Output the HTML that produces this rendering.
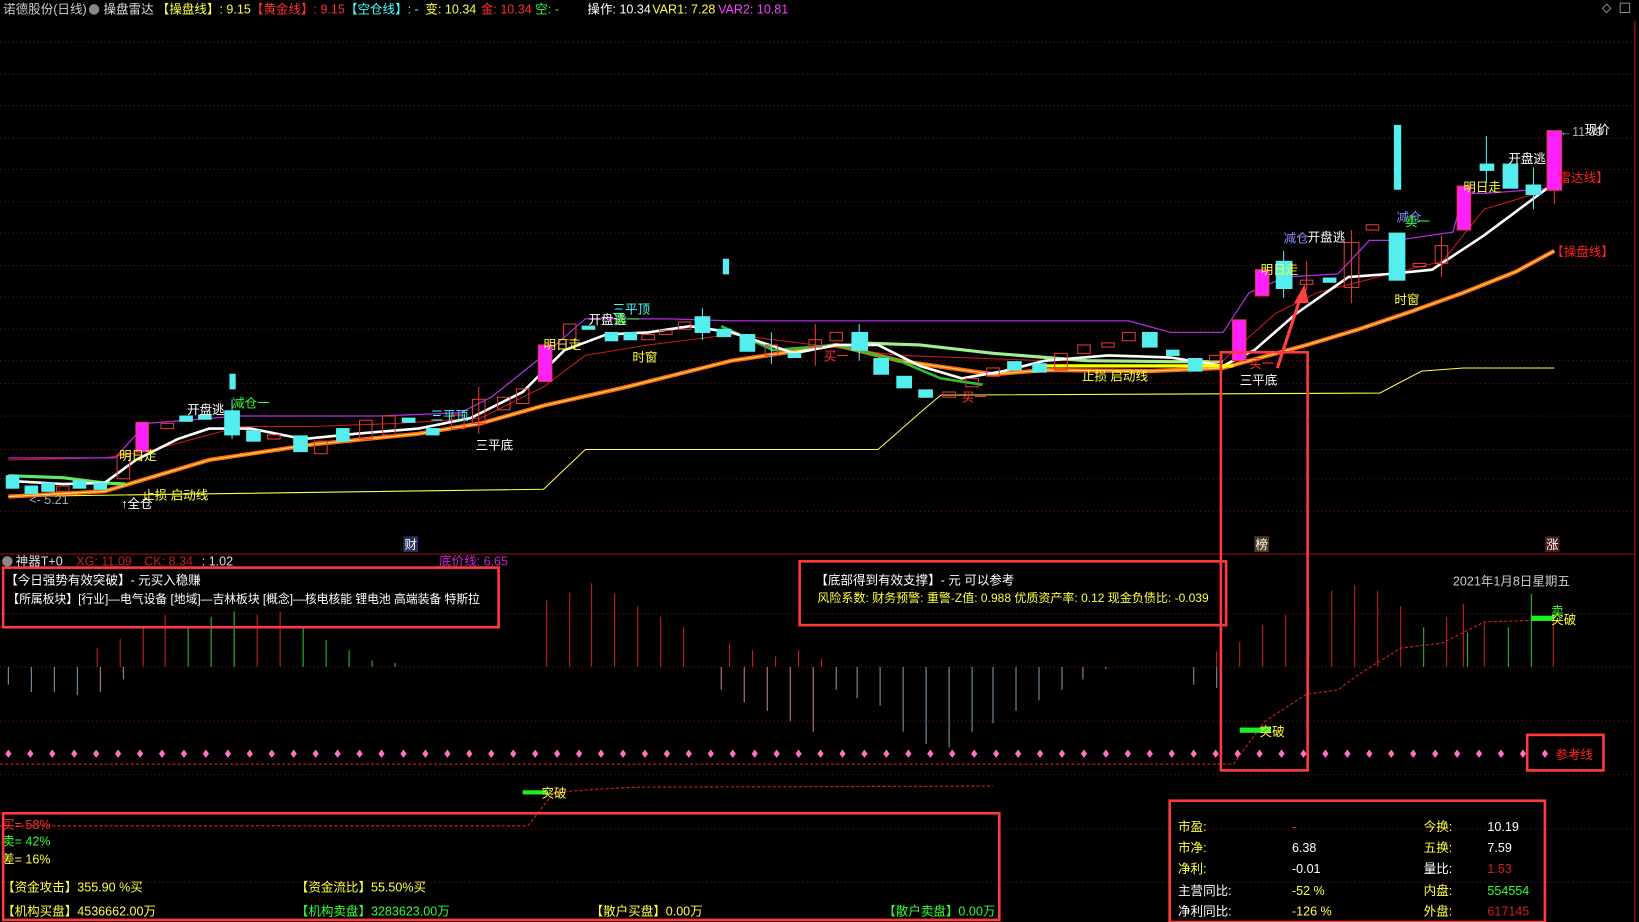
<!DOCTYPE html>
<html><head><meta charset="utf-8">
<style>
html,body{margin:0;padding:0;background:#000;overflow:hidden;}
svg{display:block;}
text{font-family:"Liberation Sans","Noto Sans CJK SC",sans-serif;font-size:12px;}
.s{font-size:11.3px;}
</style></head>
<body>
<svg width="1639" height="922" viewBox="0 0 1568 882" preserveAspectRatio="none" xmlns="http://www.w3.org/2000/svg">
<rect width="1568" height="882" fill="#000"/>
<g stroke="#7a1010" stroke-width="1" stroke-dasharray="1,3">
<line x1="0" y1="40" x2="1562" y2="40"/><line x1="0" y1="71" x2="1562" y2="71"/><line x1="0" y1="101" x2="1562" y2="101"/>
<line x1="0" y1="132" x2="1562" y2="132"/><line x1="0" y1="162" x2="1562" y2="162"/><line x1="0" y1="193" x2="1562" y2="193"/>
<line x1="0" y1="223" x2="1562" y2="223"/><line x1="0" y1="254" x2="1562" y2="254"/><line x1="0" y1="284" x2="1562" y2="284"/>
<line x1="0" y1="315" x2="1562" y2="315"/><line x1="0" y1="345" x2="1562" y2="345"/><line x1="0" y1="367" x2="1562" y2="367"/>
<line x1="0" y1="398" x2="1562" y2="398"/><line x1="0" y1="430" x2="1562" y2="430"/><line x1="0" y1="458" x2="1562" y2="458"/>
<line x1="0" y1="489" x2="1562" y2="489"/>
<line x1="0" y1="587" x2="1562" y2="587"/><line x1="0" y1="638" x2="1562" y2="638"/><line x1="0" y1="690" x2="1562" y2="690"/>
<line x1="0" y1="741" x2="1562" y2="741"/><line x1="0" y1="793" x2="1562" y2="793"/><line x1="0" y1="844" x2="1562" y2="844"/>
</g>
<line x1="1564" y1="20" x2="1564" y2="882" stroke="#c01818"/>
<line x1="0" y1="530" x2="1564" y2="530" stroke="#a01515"/>

<text x="3" y="13" fill="#ccc">诺德股份(日线)</text>
<circle cx="90" cy="9" r="5" fill="#888"/>
<text x="99" y="13" fill="#ddd">操盘雷达</text>
<text x="150" y="13" fill="#ffff40">【操盘线】: 9.15</text>
<text x="240" y="13" fill="#ff3030">【黄金线】: 9.15</text>
<text x="330" y="13" fill="#40ffff">【空仓线】: -</text>
<text x="407" y="13" fill="#ffff40">变: 10.34</text>
<text x="460" y="13" fill="#ff3030">金: 10.34</text>
<text x="512" y="13" fill="#30ff30">空: -</text>
<text x="562" y="13" fill="#fff">操作: 10.34</text>
<text x="624" y="13" fill="#ffff40">VAR1: 7.28</text>
<text x="687" y="13" fill="#ff40ff">VAR2: 10.81</text>
<path d="M1537,4 l4,4 -4,4 -4,-4z" fill="none" stroke="#888"/>
<rect x="1550" y="3" width="9" height="9" fill="none" stroke="#888"/>

<polyline fill="none" stroke="#ffff40" stroke-width="1" points="8,475 520,468 560,430 840,430 880,395 900,378 1320,376 1360,355 1400,352 1487,352"/>
<polyline fill="none" stroke="#cc1a1a" stroke-width="1" points="8,440 100,438 140,432 230,408 300,408 380,405 460,400 520,370 560,340 620,330 700,320 780,330 860,340 1000,345 1170,345 1220,300 1260,280 1330,262 1380,250 1420,200 1487,180"/>
<polyline fill="none" stroke="#ff6a10" stroke-width="4" points="8,475 100,470 200,440 300,425 400,415 460,405 520,388 600,370 700,345 800,330 860,345 950,358 1000,354 1100,355 1170,352 1250,330 1300,315 1350,298 1400,280 1450,260 1487,240"/>
<polyline fill="none" stroke="#ffe060" stroke-width="1" points="8,475 100,470 200,440 300,425 400,415 460,405 520,388 600,370 700,345 800,330 860,345 950,358 1000,354 1100,355 1170,352 1250,330 1300,315 1350,298 1400,280 1450,260 1487,240"/>
<polyline fill="none" stroke="#b030e0" stroke-width="1.2" points="8,438 110,438 140,405 230,398 300,398 360,398 440,395 470,380 520,340 560,305 620,305 640,305 700,307 1080,307 1120,318 1170,318 1195,280 1230,265 1280,262 1310,230 1335,230 1390,222 1400,185 1420,185 1487,180"/>
<polyline fill="none" stroke="#60e860" stroke-width="3" points="8,455 60,457 100,462 120,463"/>
<polyline fill="none" stroke="#30c030" stroke-width="2.5" points="690,312 740,335 800,330 860,345 900,362 940,368"/>
<polyline fill="none" stroke="#a0f090" stroke-width="3" points="820,328 880,330 950,338 1040,345 1120,346 1170,346"/>
<polyline fill="none" stroke="#fff" stroke-width="2.5" points="8,460 60,463 100,462 130,440 170,420 200,410 240,410 290,420 340,415 400,410 450,400 500,375 540,335 580,320 620,318 660,312 700,318 760,338 800,330 840,330 880,350 920,362 960,355 1000,345 1060,340 1120,342 1170,350 1200,335 1240,300 1290,265 1330,262 1370,258 1420,225 1487,175"/>
<line x1="1000" y1="350" x2="1180" y2="350" stroke="#ffff00" stroke-width="3"/>

<g stroke-width="1">
<g fill="#55eeee" stroke="#55eeee">
<rect x="6" y="455" width="12" height="12"/><rect x="24" y="465" width="12" height="7"/><rect x="40" y="462" width="12" height="8"/>
<rect x="70" y="460" width="12" height="7"/><rect x="90" y="462" width="12" height="6"/><rect x="172" y="398" width="12" height="5"/>
<rect x="190" y="397" width="12" height="4"/><rect x="215" y="393" width="14" height="23"/><rect x="236" y="412" width="13" height="10"/>
<rect x="281" y="417" width="13" height="15"/><rect x="322" y="410" width="12" height="12"/><rect x="385" y="400" width="12" height="4"/>
<rect x="408" y="410" width="12" height="6"/><rect x="557" y="312" width="12" height="3"/><rect x="579" y="318" width="12" height="8"/>
<rect x="597" y="318" width="12" height="7"/><rect x="665" y="303" width="14" height="15"/><rect x="686" y="315" width="13" height="7"/>
<rect x="708" y="320" width="14" height="16"/><rect x="754" y="338" width="12" height="4"/><rect x="815" y="318" width="15" height="17"/>
<rect x="836" y="343" width="14" height="15"/><rect x="858" y="360" width="14" height="11"/><rect x="879" y="373" width="13" height="7"/>
<rect x="964" y="346" width="13" height="8"/><rect x="988" y="348" width="13" height="8"/><rect x="1093" y="318" width="14" height="14"/>
<rect x="1116" y="335" width="12" height="5"/><rect x="1137" y="343" width="13" height="12"/><rect x="1221" y="250" width="15" height="26"/>
<rect x="1266" y="266" width="12" height="4"/><rect x="1329" y="223" width="15" height="45"/><rect x="1416" y="157" width="13" height="6"/>
<rect x="1438" y="157" width="14" height="23"/><rect x="1460" y="177" width="14" height="9"/>
<rect x="1334" y="120" width="6" height="61"/><rect x="692" y="248" width="5" height="14"/><rect x="220" y="358" width="5" height="14"/>
</g>
<g fill="none" stroke="#e03a3a">
<rect x="54" y="465" width="12" height="5"/><rect x="112" y="435" width="12" height="23"/><rect x="154" y="405" width="12" height="5"/>
<rect x="256" y="416" width="12" height="4"/><rect x="301" y="422" width="12" height="12"/><rect x="344" y="402" width="12" height="18"/>
<rect x="366" y="398" width="12" height="18"/><rect x="432" y="397" width="12" height="13"/><rect x="452" y="382" width="12" height="23"/>
<rect x="476" y="380" width="12" height="12"/><rect x="494" y="372" width="12" height="14"/><rect x="539" y="310" width="12" height="15"/>
<rect x="614" y="320" width="12" height="5"/><rect x="631" y="316" width="12" height="4"/><rect x="649" y="308" width="12" height="7"/>
<rect x="732" y="330" width="12" height="10"/><rect x="774" y="325" width="12" height="7"/><rect x="794" y="318" width="12" height="8"/>
<rect x="902" y="375" width="12" height="5"/><rect x="924" y="362" width="12" height="8"/><rect x="944" y="352" width="12" height="8"/>
<rect x="1009" y="338" width="12" height="16"/><rect x="1031" y="330" width="12" height="8"/><rect x="1054" y="328" width="12" height="4"/>
<rect x="1074" y="318" width="12" height="8"/><rect x="1157" y="340" width="12" height="5"/><rect x="1244" y="268" width="12" height="4"/>
<rect x="1286" y="232" width="14" height="43"/><rect x="1307" y="215" width="12" height="5"/><rect x="1352" y="252" width="12" height="3"/>
<rect x="1373" y="235" width="12" height="17"/>
</g>
<g fill="#ff20ff" stroke="#e03a3a">
<rect x="130" y="404" width="12" height="28"/><rect x="515" y="330" width="13" height="35"/><rect x="1179" y="306" width="13" height="39"/>
<rect x="1201" y="258" width="13" height="25"/><rect x="1394" y="178" width="13" height="42"/><rect x="1480" y="125" width="14" height="57"/>
</g>
<g stroke="#e03a3a"><line x1="1487" y1="182" x2="1487" y2="195"/><line x1="1293" y1="220" x2="1293" y2="290"/><line x1="1379" y1="225" x2="1379" y2="265"/><line x1="1250" y1="250" x2="1250" y2="278"/><line x1="458" y1="370" x2="458" y2="415"/><line x1="780" y1="310" x2="780" y2="350"/></g>
<g stroke="#55eeee"><line x1="1422" y1="130" x2="1422" y2="175"/><line x1="1467" y1="160" x2="1467" y2="200"/><line x1="1228" y1="240" x2="1228" y2="285"/><line x1="672" y1="295" x2="672" y2="325"/><line x1="822" y1="310" x2="822" y2="345"/><line x1="222" y1="382" x2="222" y2="420"/><line x1="738" y1="318" x2="738" y2="348"/></g>
</g>

<g>
<text x="179" y="396" fill="#fff">开盘逃</text>
<text x="222" y="390" fill="#30ff30">减仓一</text>
<text x="114" y="440" fill="#ffff40">明日走</text>
<text x="136" y="478" fill="#ffff40">止损 启动线</text>
<text x="116" y="486" fill="#fff">↑全仓</text>
<text x="28" y="482" fill="#aaa">&lt;- 5.21</text>
<text x="412" y="402" fill="#40ffff">三平顶</text>
<text x="455" y="430" fill="#fff">三平底</text>
<text x="520" y="334" fill="#ffff40">明日走</text>
<text x="563" y="310" fill="#fff">开盘逃</text>
<text x="586" y="300" fill="#40ffff">三平顶</text>
<text x="588" y="310" fill="#30ff30">卖一</text>
<text x="605" y="346" fill="#ffff40">时窗</text>
<text x="788" y="345" fill="#ff3030">买一</text>
<text x="920" y="384" fill="#ff3030">买一</text>
<text x="1035" y="364" fill="#ffff40">止损 启动线</text>
<text x="1186" y="368" fill="#fff">三平底</text>
<text x="1195" y="352" fill="#ff3030">买一</text>
<text x="1206" y="262" fill="#ffff40">明日走</text>
<text x="1228" y="232" fill="#8888ff">减仓</text>
<text x="1251" y="231" fill="#fff">开盘逃</text>
<text x="1336" y="212" fill="#8888ff">减仓</text>
<text x="1344" y="216" fill="#30ff30">卖一</text>
<text x="1334" y="291" fill="#ffff40">时窗</text>
<text x="1400" y="183" fill="#ffff40">明日走</text>
<text x="1443" y="156" fill="#fff">开盘逃</text>
<text x="1492" y="130" fill="#aaa">←11.09</text>
<text x="1516" y="128" fill="#fff">现价</text>
<text x="1491" y="174" fill="#ff2020">雷达线】</text>
<text x="1484" y="245" fill="#ff2020">【操盘线】</text>
<rect x="386" y="513" width="14" height="15" fill="#24335a"/><text x="387" y="525" fill="#fff">财</text>
<rect x="1200" y="513" width="14" height="15" fill="#4a3a20"/><text x="1201" y="525" fill="#fff">榜</text>
<rect x="1478" y="513" width="14" height="15" fill="#4a1a1a"/><text x="1479" y="525" fill="#fff">涨</text>
</g>
<line x1="1222" y1="352" x2="1244" y2="285" stroke="#ff4040" stroke-width="3"/>
<path d="M1248,272 l-10,18 h14z" fill="#ff4040"/>

<circle cx="7" cy="537" r="5" fill="#888"/>
<text x="15" y="541" fill="#ddd">神器T+0</text>
<text x="73" y="541" fill="#c02020">XG: 11.09</text>
<text x="138" y="541" fill="#c02020">CK: 8.34</text>
<text x="193" y="541" fill="#ddd">: 1.02</text>
<text x="420" y="541" fill="#d020d0">底价线: 6.65</text>

<g stroke-width="1">
<g stroke="#d02020"><path d="M93,638V620M115,638V611M137,638V600M158,638V588M246,638V588M268,638V585M523,638V574M545,638V567M566,638V558M588,638V568M610,638V580M632,638V590M654,638V600M698,638V615M720,638V622M742,638V628M764,638V622M786,638V630M1164,638V623M1186,638V614M1208,638V598M1230,638V588M1252,638V575M1274,638V565M1296,638V560M1318,638V565M1340,638V580M1384,638V590M1400,638V578M1420,638V595M1486,638V590"/></g>
<g stroke="#30c030"><path d="M180,638V600M202,638V590M224,638V585M290,638V600M312,638V612M334,638V622M356,638V632M378,638V634M1362,638V600M1404,638V605M1443,638V600M1465,638V568"/></g>
<g stroke="#7a9ab0"><path d="M8,638V655M30,638V662M52,638V662M74,638V665M800,638V660M820,638V668M842,638V675M864,638V700M886,638V712M908,638V715M930,638V700M950,638V692M972,638V680M994,638V670M1016,638V660M1142,638V655M1164,638V658"/></g>
<g stroke="#c88080"><path d="M96,638V662M118,638V650M690,638V660M712,638V672M734,638V680M756,638V690M778,638V700M1036,638V650M1058,638V640"/></g>
</g>
<g fill="#ff70c0">
<path d="M8,717l3,4-3,4-3,-4z"/><path d="M29,717l3,4-3,4-3,-4z"/><path d="M50,717l3,4-3,4-3,-4z"/><path d="M71,717l3,4-3,4-3,-4z"/><path d="M92,717l3,4-3,4-3,-4z"/><path d="M113,717l3,4-3,4-3,-4z"/><path d="M134,717l3,4-3,4-3,-4z"/><path d="M155,717l3,4-3,4-3,-4z"/><path d="M176,717l3,4-3,4-3,-4z"/><path d="M197,717l3,4-3,4-3,-4z"/><path d="M218,717l3,4-3,4-3,-4z"/><path d="M239,717l3,4-3,4-3,-4z"/><path d="M260,717l3,4-3,4-3,-4z"/><path d="M281,717l3,4-3,4-3,-4z"/><path d="M302,717l3,4-3,4-3,-4z"/><path d="M323,717l3,4-3,4-3,-4z"/><path d="M344,717l3,4-3,4-3,-4z"/><path d="M365,717l3,4-3,4-3,-4z"/><path d="M386,717l3,4-3,4-3,-4z"/><path d="M407,717l3,4-3,4-3,-4z"/><path d="M428,717l3,4-3,4-3,-4z"/><path d="M449,717l3,4-3,4-3,-4z"/><path d="M470,717l3,4-3,4-3,-4z"/><path d="M491,717l3,4-3,4-3,-4z"/><path d="M512,717l3,4-3,4-3,-4z"/><path d="M533,717l3,4-3,4-3,-4z"/><path d="M554,717l3,4-3,4-3,-4z"/><path d="M575,717l3,4-3,4-3,-4z"/><path d="M596,717l3,4-3,4-3,-4z"/><path d="M617,717l3,4-3,4-3,-4z"/><path d="M638,717l3,4-3,4-3,-4z"/><path d="M659,717l3,4-3,4-3,-4z"/><path d="M680,717l3,4-3,4-3,-4z"/><path d="M701,717l3,4-3,4-3,-4z"/><path d="M722,717l3,4-3,4-3,-4z"/><path d="M743,717l3,4-3,4-3,-4z"/><path d="M764,717l3,4-3,4-3,-4z"/><path d="M785,717l3,4-3,4-3,-4z"/><path d="M806,717l3,4-3,4-3,-4z"/><path d="M827,717l3,4-3,4-3,-4z"/><path d="M848,717l3,4-3,4-3,-4z"/><path d="M869,717l3,4-3,4-3,-4z"/><path d="M890,717l3,4-3,4-3,-4z"/><path d="M911,717l3,4-3,4-3,-4z"/><path d="M932,717l3,4-3,4-3,-4z"/><path d="M953,717l3,4-3,4-3,-4z"/><path d="M974,717l3,4-3,4-3,-4z"/><path d="M995,717l3,4-3,4-3,-4z"/><path d="M1016,717l3,4-3,4-3,-4z"/><path d="M1037,717l3,4-3,4-3,-4z"/><path d="M1058,717l3,4-3,4-3,-4z"/><path d="M1079,717l3,4-3,4-3,-4z"/><path d="M1100,717l3,4-3,4-3,-4z"/><path d="M1121,717l3,4-3,4-3,-4z"/><path d="M1142,717l3,4-3,4-3,-4z"/><path d="M1163,717l3,4-3,4-3,-4z"/><path d="M1184,717l3,4-3,4-3,-4z"/><path d="M1205,717l3,4-3,4-3,-4z"/><path d="M1226,717l3,4-3,4-3,-4z"/><path d="M1247,717l3,4-3,4-3,-4z"/><path d="M1268,717l3,4-3,4-3,-4z"/><path d="M1289,717l3,4-3,4-3,-4z"/><path d="M1310,717l3,4-3,4-3,-4z"/><path d="M1331,717l3,4-3,4-3,-4z"/><path d="M1352,717l3,4-3,4-3,-4z"/><path d="M1373,717l3,4-3,4-3,-4z"/><path d="M1394,717l3,4-3,4-3,-4z"/><path d="M1415,717l3,4-3,4-3,-4z"/><path d="M1436,717l3,4-3,4-3,-4z"/><path d="M1457,717l3,4-3,4-3,-4z"/><path d="M1478,717l3,4-3,4-3,-4z"/>
</g>
<polyline fill="none" stroke="#e02020" stroke-dasharray="3,2" points="0,731 1180,731 1210,690 1250,664 1280,660 1300,645 1340,620 1380,615 1420,595 1480,593"/>
<polyline fill="none" stroke="#e02020" stroke-dasharray="3,2" points="505,790 530,758 570,755 610,753 950,752"/>
<polyline fill="none" stroke="#e02020" stroke-dasharray="3,2" points="0,790 505,790"/>
<rect x="1186" y="696" width="30" height="5" fill="#20ee20"/><text x="1205" y="704" fill="#ffff40">突破</text>
<rect x="1465" y="589" width="22" height="5" fill="#20ee20"/><text x="1484" y="597" fill="#ffff40">突破</text>
<text x="1484" y="589" fill="#30ff30">卖</text>
<rect x="500" y="756" width="24" height="4" fill="#20ee20"/><text x="518" y="763" fill="#ffff40">突破</text>
<text x="1390" y="560" fill="#ccc">2021年1月8日星期五</text>
<text x="1488" y="726" fill="#ff2020">参考线</text>

<text x="5" y="559" fill="#fff">【今日强势有效突破】- 元买入稳赚</text>
<text x="7" y="577" fill="#fff" class="s">【所属板块】[行业]—电气设备 [地域]—吉林板块 [概念]—核电核能 锂电池 高端装备 特斯拉</text>
<text x="780" y="559" fill="#fff">【底部得到有效支撑】- 元 可以参考</text>
<text x="782" y="576" fill="#ffff40" style="font-size:11.5px">风险系数: 财务预警: 重警-Z值: 0.988 优质资产率: 0.12 现金负债比: -0.039</text>

<text x="2" y="793" fill="#ff3030">买= 58%</text>
<text x="2" y="809" fill="#30ff30">卖= 42%</text>
<text x="2" y="826" fill="#ffff40">差= 16%</text>
<text x="2" y="853" fill="#ffff40">【资金攻击】355.90 %买</text>
<text x="283" y="853" fill="#ffff40">【资金流比】55.50%买</text>
<text x="2" y="876" fill="#ffff40">【机构买盘】4536662.00万</text>
<text x="283" y="876" fill="#30ff30">【机构卖盘】3283623.00万</text>
<text x="565" y="876" fill="#ffff40">【散户买盘】0.00万</text>
<text x="845" y="876" fill="#30ff30">【散户卖盘】0.00万</text>

<text x="1127" y="795" fill="#ffff40">市盈:</text><text x="1236" y="795" fill="#ff3030">-</text>
<text x="1127" y="815" fill="#ffff40">市净:</text><text x="1236" y="815" fill="#fff">6.38</text>
<text x="1127" y="835" fill="#ffff40">净利:</text><text x="1236" y="835" fill="#fff">-0.01</text>
<text x="1127" y="856" fill="#fff">主营同比:</text><text x="1236" y="856" fill="#ffff40">-52 %</text>
<text x="1127" y="876" fill="#fff">净利同比:</text><text x="1236" y="876" fill="#ffff40">-126 %</text>
<text x="1362" y="795" fill="#ffff40">今换:</text><text x="1423" y="795" fill="#fff">10.19</text>
<text x="1362" y="815" fill="#ffff40">五换:</text><text x="1423" y="815" fill="#fff">7.59</text>
<text x="1362" y="835" fill="#fff">量比:</text><text x="1423" y="835" fill="#d02020">1.53</text>
<text x="1362" y="856" fill="#ffff40">内盘:</text><text x="1423" y="856" fill="#30ff30">554554</text>
<text x="1362" y="876" fill="#ffff40">外盘:</text><text x="1423" y="876" fill="#d02020">617145</text>

<g fill="none" stroke="#ff3a3a" stroke-width="2.5">
<rect x="3" y="543" width="474" height="57"/>
<rect x="765" y="537" width="408" height="61"/>
<rect x="1168" y="337" width="83" height="400"/>
<rect x="1461" y="703" width="73" height="34"/>
<rect x="3" y="778" width="953" height="102"/>
<rect x="1119" y="766" width="359" height="116"/>
</g>
</svg>
</body></html>
